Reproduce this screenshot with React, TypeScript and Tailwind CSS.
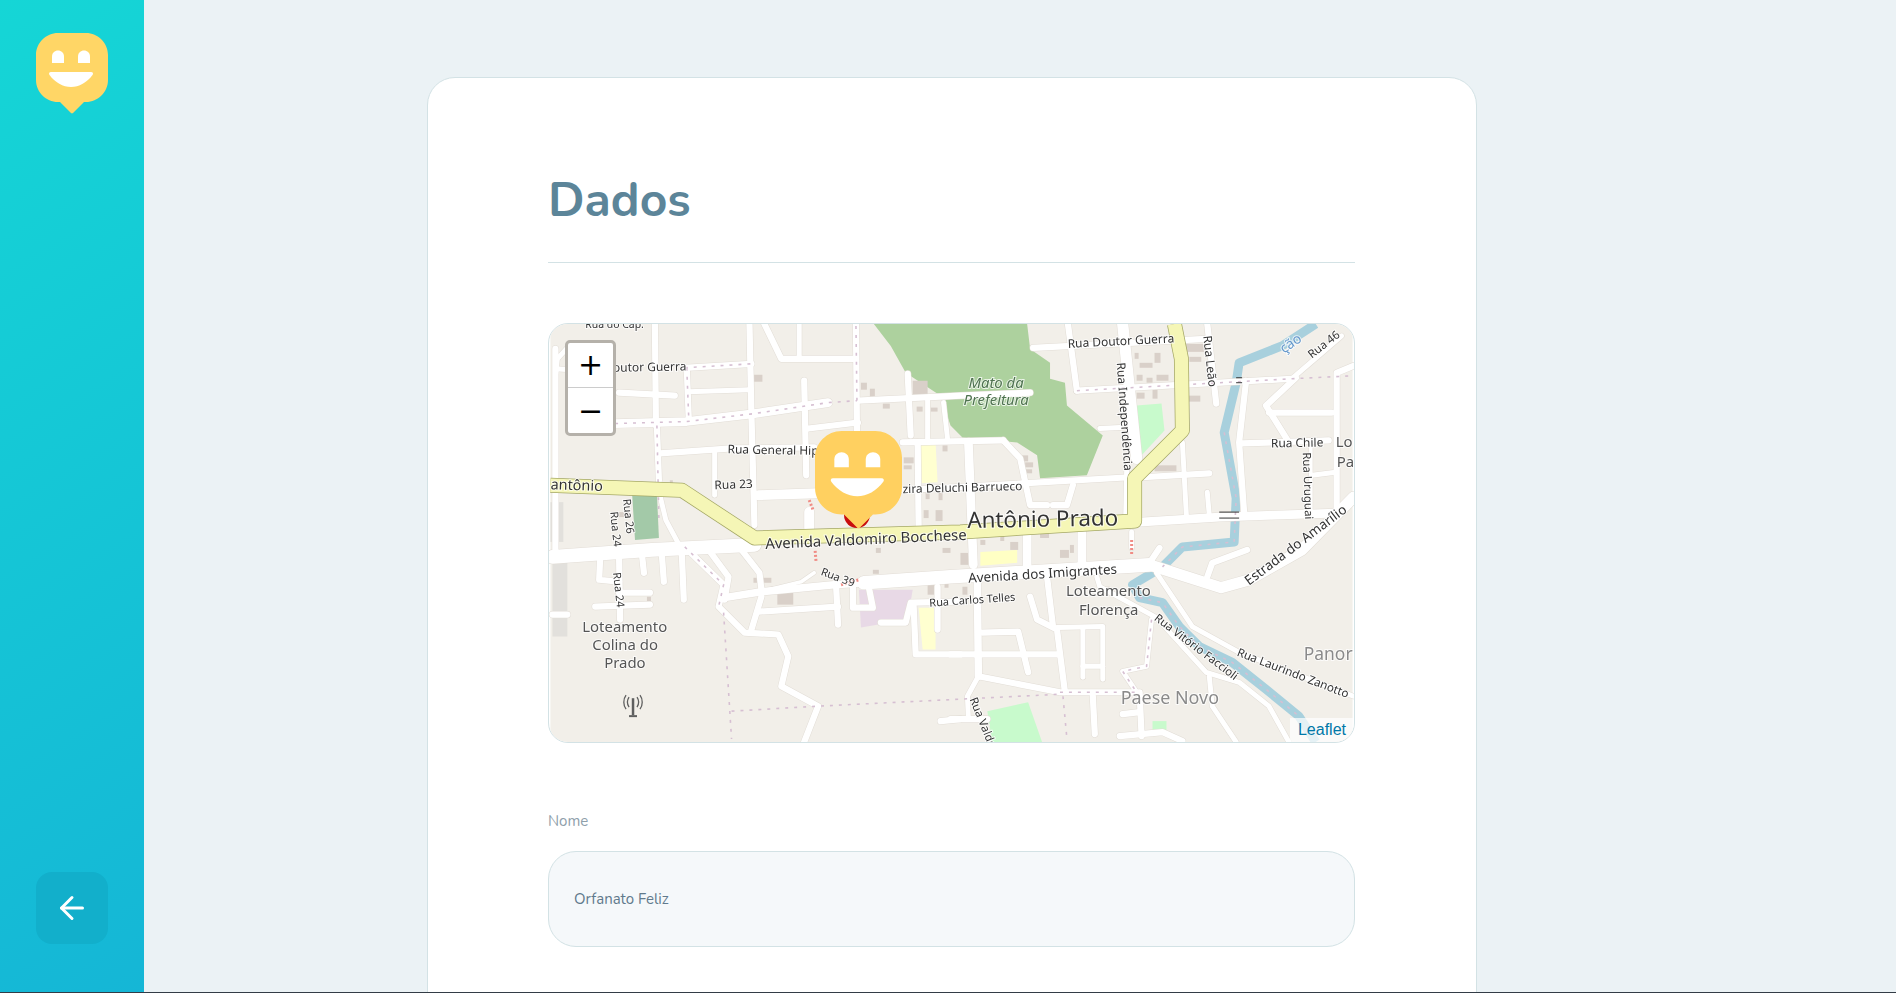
import { ArrowLeft } from 'lucide-react';

// [points, road width] in page pixels, the map svg uses the same numbers in its viewBox
const roads: [string, number][] = [
  ['553,348 553,560', 5],
  ['553,375 555,358 565,347', 4],
  ['553,368 583,370', 4],
  ['653,323 654,425', 5],
  ['655,425 657,480', 5],
  ['658,495 664,520 680,550', 4],
  ['748,323 750,415 753,525', 5],
  ['763,323 780,358 853,358', 5],
  ['798,323 798,357', 4],
  ['855,323 856,432', 5],
  ['683,367 750,363', 5],
  ['685,367 687,418', 5],
  ['617,392 673,395', 5],
  ['687,391 748,389', 4],
  ['613,423 685,421 753,413 827,402', 7],
  ['857,400 960,395 1030,392', 5],
  ['803,380 805,475', 5],
  ['807,428 857,422', 5],
  ['658,453 730,448 813,447', 5],
  ['757,495 817,493', 8],
  ['808,512 808,528', 8],
  ['713,452 713,495', 4],
  ['907,373 910,435', 5],
  ['917,442 918,528', 5],
  ['927,398 927,438', 4],
  ['943,402 947,438', 4],
  ['902,442 1003,440', 5],
  ['1003,440 1020,458 1030,505 1047,505', 5],
  ['968,442 973,565', 7],
  ['1073,485 1067,505 1053,505', 5],
  ['1100,428 1120,427', 4],
  ['1027,533 1027,565', 7],
  ['1082,533 1082,565', 7],
  ['1132,532 1132,548', 4],
  ['902,490 1130,477', 5],
  ['1143,477 1210,473', 5],
  ['1208,492 1210,515', 4],
  ['1183,442 1187,515', 4],
  ['1033,347 1207,338', 5],
  ['1068,323 1077,390', 5],
  ['1077,390 1293,378', 5],
  ['1123,323 1137,458', 9],
  ['1127,470 1126,520', 4],
  ['1208,323 1217,403', 5],
  ['1247,380 1240,442 1245,512', 5],
  ['1243,443 1330,440', 5],
  ['1297,377 1267,405 1290,442', 5],
  ['1293,378 1343,335', 4],
  ['1355,365 1338,372 1338,512', 5],
  ['1270,412 1333,412', 5],
  ['1312,443 1312,515', 3],
  ['1313,475 1337,472', 4],
  ['1140,522 1220,517 1337,513', 7],
  ['550,557 650,550 753,545', 11],
  ['863,583 950,577 1150,565', 11],
  ['1150,565 1222,588 1250,580 1303,550 1355,497', 9],
  ['598,557 597,580 617,582', 5],
  ['617,557 618,620', 5],
  ['640,555 642,573', 5],
  ['660,555 662,582', 5],
  ['680,553 682,600', 5],
  ['593,607 648,605', 5],
  ['617,593 648,593', 5],
  ['550,615 565,615', 5],
  ['683,547 722,585 717,607 743,633 777,635 787,657 780,687 817,707 803,743', 5],
  ['707,550 727,577 723,600', 5],
  ['740,550 758,573 760,590', 5],
  ['723,598 760,592 833,585 863,583', 6],
  ['760,597 750,630', 5],
  ['757,612 837,607', 5],
  ['835,585 837,625', 5],
  ['852,583 852,608 872,608 867,583', 5],
  ['880,623 905,623 910,603 960,602', 5],
  ['913,607 915,655 960,655', 5],
  ['937,587 937,630', 5],
  ['813,573 800,582 767,590', 3],
  ['940,722 960,720', 5],
  ['977,583 978,677', 6],
  ['978,677 967,697 968,720', 4],
  ['978,677 1060,693 1137,693', 5],
  ['1137,693 1123,672 1147,667 1152,620', 4],
  ['982,633 1018,632 1028,673', 5],
  ['950,655 1057,655', 5],
  ['1030,597 1037,620 1057,630 1065,693', 5],
  ['1047,577 1053,627', 5],
  ['1057,628 1103,627 1103,680', 4],
  ['1083,628 1083,678', 4],
  ['1083,667 1103,667', 4],
  ['1097,577 1100,587 1157,618 1207,673 1240,683 1270,707 1290,743', 4],
  ['1157,573 1193,627 1240,653 1355,697', 4],
  ['1150,563 1160,548', 5],
  ['1208,577 1213,563 1248,550', 5],
  ['1210,677 1213,707 1237,743', 4],
  ['1123,715 1140,713', 5],
  ['1140,693 1142,737', 5],
  ['1120,737 1163,733 1183,742', 5],
  ['1093,697 1095,735', 5],
  ['950,720 987,720', 5],
];

const footpaths = [
  '655,425 657,520',
  '683,367 750,363',
  '685,367 687,418',
  '613,423 685,421 753,413 827,402 856,400',
  '855,325 856,400',
  '683,547 722,585 717,607',
  '1077,390 1293,378 1355,375',
  '722,613 730,740',
  '730,712 817,707 1060,695',
  '1063,697 1067,740',
  '1060,693 1137,693 1123,672 1147,667 1152,620',
  '1225,432 1237,498 1235,542 1183,547 1163,567',
  '1140,598 1163,603 1180,627 1200,647 1233,663 1267,690 1300,717',
];

const buildings: [number, number, number, number][] = [
  [752, 374, 9, 7], [860, 382, 6, 7], [869, 388, 5, 8], [912, 380, 15, 16], [882, 403, 7, 5], [916, 406, 6, 5], [930, 407, 7, 4],
  [942, 445, 5, 6], [903, 457, 10, 6], [903, 465, 8, 4], [925, 492, 4, 7], [938, 492, 4, 8], [923, 510, 5, 8], [935, 510, 7, 11],
  [1022, 455, 6, 6], [1025, 462, 8, 5], [1025, 469, 7, 4], [1135, 352, 4, 6], [1140, 362, 13, 5], [1155, 352, 6, 10], [1137, 374, 6, 6],
  [1147, 377, 6, 5], [1157, 374, 12, 6], [1137, 392, 8, 6], [1153, 388, 5, 10], [1183, 395, 18, 6], [1185, 343, 20, 8], [1190, 356, 12, 5],
  [1155, 465, 22, 6], [960, 553, 8, 12], [980, 540, 5, 5], [1000, 535, 4, 6], [1010, 542, 8, 8], [1040, 530, 9, 8], [1060, 550, 9, 8],
  [1070, 545, 4, 8], [958, 575, 7, 6], [617, 512, 10, 5], [668, 480, 3, 3], [752, 578, 18, 5], [776, 590, 16, 15], [645, 597, 4, 6],
  [872, 570, 6, 4], [927, 585, 7, 10], [944, 584, 4, 4], [875, 548, 5, 5], [942, 548, 8, 5], [1105, 587, 5, 6], [962, 587, 5, 8],
];

function Smiley({ className, fill }: { className: string; fill: string }) {
  return (
    <svg viewBox="0 0 72 81" className={className}>
      <path
        d="M22 0H50C62 0 72 10 72 22V47C72 59 62 69 50 69H48L37 80C36.4 80.6 35.6 80.6 35 80L24 69H22C10 69 0 59 0 47V22C0 10 10 0 22 0Z"
        fill={fill}
      />
      <path d="M16 30V23.5C16 20 18.7 17.5 22 17.5C25.3 17.5 28 20 28 23.5V30H16Z" fill="#fff" />
      <path d="M42 30V23.5C42 20 44.7 17.5 48 17.5C51.3 17.5 54 20 54 23.5V30H42Z" fill="#fff" />
      <path d="M15 39H55C57 39 57.5 40.5 56.5 42C51 49.5 43 54 35 54C27 54 19 49.5 13.5 42C12.5 40.5 13 39 15 39Z" fill="#fff" />
    </svg>
  );
}

function Label({ x, y, size = 12, rotate = 0, color = '#333', italic = false, children }: {
  x: number;
  y: number;
  size?: number;
  rotate?: number;
  color?: string;
  italic?: boolean;
  children: string;
}) {
  return (
    <text
      x={x}
      y={y}
      fontSize={size}
      fontStyle={italic ? 'italic' : 'normal'}
      fill={color}
      stroke="#fff"
      strokeOpacity="0.75"
      strokeWidth="2"
      paintOrder="stroke"
      transform={`rotate(${rotate} ${x} ${y})`}
    >
      {children}
    </text>
  );
}

const avenue = '548,485 680,490 753,538 960,532 1135,521 1135,478 1183,430 1182,358 1175,323';

function MapDrawing() {
  return (
    <svg viewBox="548 323 806 420" className="block w-full h-full blur-[0.5px] font-['Noto_Sans',sans-serif]">
      <rect x="548" y="323" width="806" height="420" fill="#f2efe9" />

      {/* Landuse */}
      <polygon
        points="873,323 1027,323 1030,348 1050,362 1050,378 1065,382 1067,405 1103,435 1087,475 1040,478 1037,455 1017,442 962,437 950,425 940,395 905,372 890,345"
        fill="#add19e"
      />
      <polygon points="630,492 655,493 657,538 633,540" fill="#a3c9a8" />
      <polygon points="548,502 561,502 561,542 548,542" fill="#e2e0dc" />
      <polygon points="550,560 565,560 565,637 550,637" fill="#e2e0dc" />
      <polygon points="858,590 912,590 907,620 860,628" fill="#e8d9e6" />
      <polygon points="918,608 935,608 935,650 922,650" fill="#ffffd0" />
      <polygon points="917,443 935,442 937,482 918,483" fill="#ffffd0" />
      <polygon points="980,552 1017,550 1017,563 980,566" fill="#ffffc4" />
      <polygon points="1137,405 1162,403 1165,430 1142,455" fill="#c8facc" />
      <polygon points="987,712 1028,703 1042,743 992,743" fill="#c8facc" />
      <rect x="1153" y="722" width="14" height="10" fill="#c8facc" />
      {buildings.map(([x, y, w, h]) => (
        <rect key={`${x}-${y}`} x={x} y={y} width={w} height={h} fill="#d9d0c9" />
      ))}

      {/* River */}
      <polyline
        points="1317,323 1283,345 1240,362 1237,382 1225,432 1237,498 1235,542 1183,547 1163,567 1133,585 1140,598 1163,603 1180,627 1200,647 1233,663 1267,690 1300,717 1317,743"
        fill="none"
        stroke="#a8d0dd"
        strokeWidth="9"
        strokeLinejoin="round"
      />

      {/* Roads */}
      {roads.map(([points, width]) => (
        <polyline key={`c-${points}`} points={points} fill="none" stroke="#e2ddd6" strokeWidth={width * 1.25 + 1} strokeLinecap="round" strokeLinejoin="round" />
      ))}
      {roads.map(([points, width]) => (
        <polyline key={points} points={points} fill="none" stroke="#fff" strokeWidth={width * 1.25} strokeLinecap="round" strokeLinejoin="round" />
      ))}
      {footpaths.map((points) => (
        <polyline key={points} points={points} fill="none" stroke="#d6bfd2" strokeWidth="1.6" strokeDasharray="3 6" />
      ))}
      <polyline points="808,500 812,510" stroke="#f08c85" strokeWidth="3" strokeDasharray="2 2" fill="none" />
      <polyline points="814,551 815,563" stroke="#f08c85" strokeWidth="3" strokeDasharray="2 2" fill="none" />
      <polyline points="840,585 858,580" stroke="#f08c85" strokeWidth="3" strokeDasharray="2 2" fill="none" />
      <polyline points="1132,540 1132,556" stroke="#f08c85" strokeWidth="3" strokeDasharray="2 2" fill="none" />

      {/* Main avenue */}
      <polyline points={avenue} fill="none" stroke="#a5a866" strokeWidth="15" strokeLinejoin="round" />
      <polyline points={avenue} fill="none" stroke="#f5f6b6" strokeWidth="13.5" strokeLinejoin="round" />

      {/* Bridges */}
      <path d="M1220 512H1240M1220 518H1240M1237 377H1243M1237 382H1243" stroke="#333" strokeWidth="1" />

      {/* Labels */}
      <Label x={583} y={327} size={10.5}>Rua do Cap.</Label>
      <Label x={611} y={371} rotate={-1}>outor Guerra</Label>
      <Label x={726} y={453} rotate={1}>Rua General Hip</Label>
      <Label x={713} y={489} rotate={-2}>Rua 23</Label>
      <Label x={548} y={489} size={14.5} rotate={2}>antônio</Label>
      <Label x={621} y={499} size={11} rotate={84}>Rua 26</Label>
      <Label x={608} y={512} size={11} rotate={84}>Rua 24</Label>
      <Label x={611} y={573} size={11} rotate={84}>Rua 24</Label>
      <Label x={764} y={549} size={15} rotate={-2.6}>Avenida Valdomiro Bocchese</Label>
      <Label x={967} y={528} size={22.5} rotate={-1}>Antônio Prado</Label>
      <Label x={902} y={493} rotate={-1.5}>zira Deluchi Barrueco</Label>
      <Label x={968} y={387} size={15} color="#4f7350" italic>Mato da</Label>
      <Label x={963} y={404} size={15} color="#4f7350" italic>Prefeitura</Label>
      <Label x={1068} y={347} rotate={-3}>Rua Doutor Guerra</Label>
      <Label x={1117} y={362} rotate={86}>Rua Independência</Label>
      <Label x={1204} y={335} rotate={84}>Rua Leão</Label>
      <Label x={1272} y={447} rotate={-1}>Rua Chile</Label>
      <Label x={1304} y={452} size={11.5} rotate={88}>Rua Uruguai</Label>
      <Label x={1337} y={447} size={15} color="#555">Lo</Label>
      <Label x={1338} y={467} size={15} color="#555">Pa</Label>
      <Label x={1313} y={358} size={11.5} rotate={-38}>Rua 46</Label>
      <Label x={1285} y={353} size={14} rotate={-35} color="#6699cc">ção</Label>
      <Label x={1250} y={586} size={13.5} rotate={-37}>Estrada do Amarílio</Label>
      <Label x={968} y={583} size={13.5} rotate={-3.5}>Avenida dos Imigrantes</Label>
      <Label x={929} y={607} size={11} rotate={-4}>Rua Carlos Telles</Label>
      <Label x={819} y={575} size={11} rotate={20}>Rua 39</Label>
      <Label x={580} y={632} size={15} color="#555">Loteamento</Label>
      <Label x={590} y={651} size={15} color="#555">Colina do</Label>
      <Label x={602} y={669} size={15} color="#555">Prado</Label>
      <Label x={1066} y={596} size={15} color="#555">Loteamento</Label>
      <Label x={1079} y={615} size={15} color="#555">Florença</Label>
      <Label x={1154} y={620} size={11.5} rotate={37}>Rua Vitório Faccioli</Label>
      <Label x={1237} y={656} size={11.7} rotate={21}>Rua Laurindo Zanotto</Label>
      <Label x={1305} y={661} size={17.5} color="#8a8a8a">Panor</Label>
      <Label x={1121} y={705} size={18} color="#8a8a8a">Paese Novo</Label>
      <Label x={969} y={700} size={11.5} rotate={68}>Rua Valdomiro</Label>

      {/* Antenna */}
      <g stroke="#5f5f5f" fill="none" strokeWidth="1.3">
        <path d="M631 699V716" strokeWidth="2.5" />
        <path d="M627 717H635" strokeWidth="2" />
        <path d="M627 698C625 701 625 705 627 708M635 698C637 701 637 705 635 708" />
        <path d="M624 696C621 700 621 706 624 710M638 696C641 700 641 706 638 710" />
      </g>

      {/* Pin under the marker */}
      <circle cx="856" cy="515" r="13" fill="#c90d0d" />
    </svg>
  );
}

export default function App() {
  return (
    <div className="relative flex h-[993px] overflow-hidden bg-[#EBF2F5] font-['Nunito','Lato',sans-serif]">
      <aside className="flex flex-col justify-between items-center w-[144px] shrink-0 pt-[33px] pb-[49px] bg-[linear-gradient(329.54deg,#15B6D6_0%,#15D6D6_100%)]">
        <Smiley className="w-[72px] h-[81px]" fill="#FFD666" />
        <button className="flex items-center justify-center w-[72px] h-[72px] rounded-[16px] bg-[#12AFCB]">
          <ArrowLeft size={36} color="#fff" strokeWidth={2} />
        </button>
      </aside>

      <main className="flex-1 pl-[283px] pt-[77px]">
        <div className="w-[1050px] h-[1100px] pl-[120px] pr-[121px] pt-[86px] bg-white border border-[#D3E2E5] rounded-[28px]">
          <h1 className="pb-[26px] border-b border-[#D3E2E5] text-[48px] leading-[72px] font-bold text-[#5C8599]">
            Dados
          </h1>

          <div className="relative mt-[60px] h-[420px] overflow-hidden border border-[#D3E2E5] rounded-[20px]">
            <MapDrawing />
            <div className="absolute left-[16px] top-[16px] w-[51px] border-[3px] border-[#b5b1aa] rounded-[5px] bg-white">
              <div className="flex items-center justify-center h-[45px] border-b border-[#ccc] font-['DejaVu_Sans',sans-serif] text-[30px] leading-none text-black">+</div>
              <div className="flex items-center justify-center h-[45px] font-['DejaVu_Sans',sans-serif] text-[30px] leading-none text-black">−</div>
            </div>
            <div className="absolute right-0 bottom-0 pl-[8px] pr-[8px] pt-[1px] h-[24px] bg-white/70 font-['Liberation_Sans',sans-serif] text-[16px] leading-[22px] text-[#0078A8]">
              Leaflet
            </div>
            <div className="absolute left-[266px] top-[107px]">
              <Smiley className="w-[87px] h-[98px]" fill="#FFD060" />
            </div>
          </div>

          <label className="block mt-[68px] text-[15px] leading-[20px] text-[#8FA0AB]">Nome</label>
          <div className="flex items-center mt-[20px] h-[96px] px-[25px] bg-[#F5F8FA] border border-[#D3E2E5] rounded-[28px] text-[15px] text-[#617A8C]">
            Orfanato Feliz
          </div>
        </div>
      </main>

      <div className="absolute left-0 right-0 bottom-0 h-px bg-[#333c46]" />
    </div>
  );
}
